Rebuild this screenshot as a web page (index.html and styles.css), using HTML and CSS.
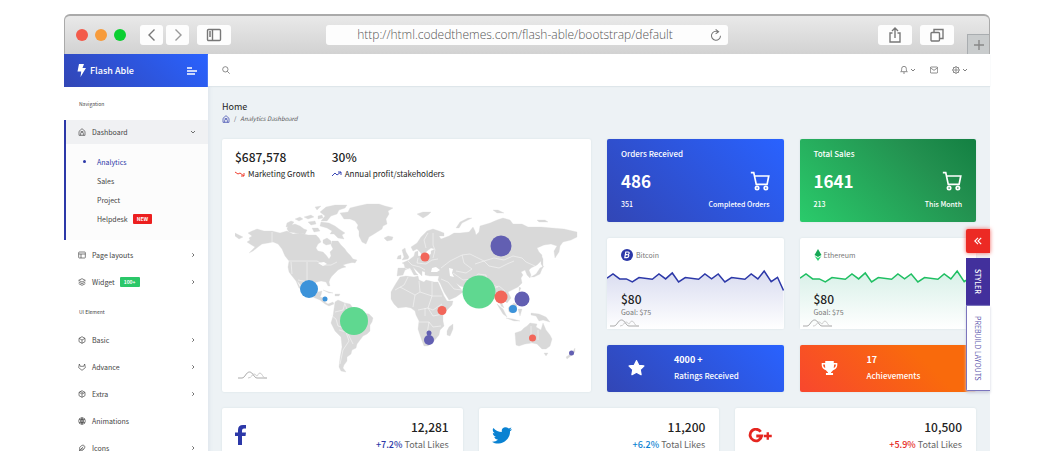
FILE: index.html
```html
<!DOCTYPE html>
<html lang="en">
<head>
<meta charset="utf-8">
<title>Flash Able</title>
<link rel="stylesheet" href="styles.css">
</head>
<body>
<svg class="defs" aria-hidden="true">
  <symbol id="right" viewBox="0 0 24 24"><path d="M9 5l7 7-7 7"/></symbol>
  <symbol id="down" viewBox="0 0 24 24"><path d="M4 8l8 8 8-8"/></symbol>
  <symbol id="home" viewBox="0 0 24 24"><path d="M3 10l9-8 9 8v12H3zM8 22v-6a4 4 0 018 0v6M8 11h8"/></symbol>
  <symbol id="box" viewBox="0 0 24 24"><path d="M12 2l9 5v10l-9 5-9-5V7zM3 7l9 5 9-5M12 12v10"/></symbol>
  <symbol id="cart" viewBox="0 0 24 24"><path d="M1 2h3.500l3 14h13l2-10H5.500"/><circle cx="8.500" cy="20.500" r="2"/><circle cx="19" cy="20.500" r="2"/></symbol>
  <symbol id="curve" viewBox="0 0 30 8"><path d="M0 7h4c3 0 4-6 7.500-6S16 7 19 7h10" stroke="#aaa"/><path d="M10 7c4 0 4-4 6-4s2 2 3 2 1-3 3-3 3 5 5 5h2" stroke="#ccc"/></symbol>
</svg>
<div class="window">
  <div class="chrome">
    <div class="lights"><i class="red"></i><i class="amber"></i><i class="green"></i></div>
    <div class="arrows">
      <button class="key" aria-label="Back"><svg class="i16" viewBox="0 0 16 16"><path d="M10.500 2.500L5 8l5.500 5.500"/></svg></button>
      <button class="key pale" aria-label="Forward"><svg class="i16" viewBox="0 0 16 16"><path d="M5.500 2.500L11 8l-5.500 5.500"/></svg></button>
    </div>
    <button class="key wide" aria-label="Sidebar"><svg class="i16" viewBox="0 0 16 16"><rect x="1.500" y="2.500" width="13" height="11" rx="1"/><path d="M6.500 2.500v11M3 5h2M3 7h2M3 9h2"/></svg></button>
    <div class="address">
      <input type="text" aria-label="Address" value="http://html.codedthemes.com/flash-able/bootstrap/default">
      <button class="reload" aria-label="Reload"><svg class="i12" viewBox="0 0 16 16"><path d="M14 9a6 6 0 11-3.500-5.500M7.500 .5l4 3-4 3"/></svg></button>
    </div>
    <div class="tools">
      <button class="key wide" aria-label="Share"><svg class="i16" viewBox="0 0 16 16"><path d="M5.500 6H3v9h10V6h-2.500M8 11V1M5 4l3-3 3 3"/></svg></button>
      <button class="key wide" aria-label="Tabs"><svg class="i16" viewBox="0 0 16 16"><rect x="2" y="5.500" width="8.500" height="8.500" rx="1"/><path d="M5 5V2.500h9v9h-3"/></svg></button>
    </div>
    <button class="plus" aria-label="New tab"><svg class="i12" viewBox="0 0 12 12"><path d="M6 1v10M1 6h10"/></svg></button>
  </div>
  <div class="app">
    <aside class="sidebar">
      <div class="brand">
        <svg class="bolt" viewBox="0 0 9 13"><path d="M2 0h5L5.500 4H9L3.500 13l.7-5.500H.5z"/></svg>
        <span>Flash Able</span>
        <button class="burger" aria-label="Menu"><svg viewBox="0 0 10 8"><path d="M0 1h5M0 4h10M0 7h8"/></svg></button>
      </div>
      <nav>
        <h6>Navigation</h6>
        <div class="open">
          <a class="item" href="#"><svg class="ic"><use href="#home"/></svg>Dashboard<svg class="end"><use href="#down"/></svg></a>
          <div class="sub">
            <a class="on" href="#">Analytics</a>
            <a href="#">Sales</a>
            <a href="#">Project</a>
            <a href="#">Helpdesk <b class="tag new">NEW</b></a>
          </div>
        </div>
        <div class="group">
          <a class="item" href="#"><svg class="ic" viewBox="0 0 24 24"><rect x="2" y="3" width="20" height="18" rx="2"/><path d="M2 9h20M9 9v12"/></svg>Page layouts<svg class="end"><use href="#right"/></svg></a>
          <a class="item" href="#"><svg class="ic" viewBox="0 0 24 24"><path d="M12 2l10 5-10 5L2 7zM2 12l10 5 10-5M2 17l10 5 10-5"/></svg>Widget <b class="tag count">100+</b><svg class="end"><use href="#right"/></svg></a>
        </div>
        <h6 class="second">UI Element</h6>
        <a class="item" href="#"><svg class="ic"><use href="#box"/></svg>Basic<svg class="end"><use href="#right"/></svg></a>
        <a class="item" href="#"><svg class="ic" viewBox="0 0 24 24"><path d="M4 3l3 7h10l3-7 2 11-10 8L2 14z"/></svg>Advance<svg class="end"><use href="#right"/></svg></a>
        <a class="item" href="#"><svg class="ic" viewBox="0 0 24 24"><path d="M12 2l9 5v10l-9 5-9-5V7zM3 7l9 5 9-5M12 12v10M7 4.500l9 5"/></svg>Extra<svg class="end"><use href="#right"/></svg></a>
        <a class="item" href="#"><svg class="ic" viewBox="0 0 24 24"><circle cx="12" cy="12" r="10"/><circle cx="12" cy="12" r="4"/><path d="M12 2l4 10-4 10-4-10zM3 7l9 1 9-1M3 17l9-1 9 1"/></svg>Animations</a>
        <a class="item" href="#"><svg class="ic" viewBox="0 0 24 24"><path d="M20 12a6 6 0 00-8-8L5 10v9h9zM16 8L2 22M17 15H9"/></svg>Icons<svg class="end"><use href="#right"/></svg></a>
      </nav>
    </aside>
    <div class="page">
      <header class="topbar">
        <button aria-label="Search"><svg class="i8" viewBox="0 0 24 24"><circle cx="10" cy="10" r="8"/><path d="M16 16l7 7"/></svg></button>
        <div class="actions">
          <button aria-label="Notifications"><svg class="i8" viewBox="0 0 24 24"><path d="M2 17c3-2 3-5 3-9a7 7 0 0114 0c0 4 0 7 3 9zM9 21h6"/></svg><svg class="i6"><use href="#down"/></svg></button>
          <button aria-label="Messages"><svg class="i8" viewBox="0 0 24 24"><rect x="1" y="3" width="22" height="18" rx="3"/><path d="M2 6l10 7 10-7"/></svg></button>
          <button aria-label="Settings"><svg class="i8" viewBox="0 0 24 24"><circle cx="12" cy="12" r="9"/><circle cx="12" cy="12" r="3.500"/><path d="M12 0v3M12 21v3M0 12h3M21 12h3M3.500 3.500l2 2M18.500 18.500l2 2M3.500 20.500l2-2M18.500 5.500l2-2"/></svg><svg class="i6"><use href="#down"/></svg></button>
        </div>
      </header>
      <main>
        <h1>Home</h1>
        <div class="crumbs"><a href="#" aria-label="Home"><svg class="i8"><use href="#home"/></svg></a><span>/</span><em>Analytics Dashboard</em></div>
        <section class="cards">
          <article class="card map">
            <div class="stats">
              <div><strong>$687,578</strong><p><svg class="trend down" viewBox="0 0 10 6"><path d="M0 1l3 2 2-1 4 3M9 2v3H6"/></svg>Marketing Growth</p></div>
              <div><strong>30%</strong><p><svg class="trend" viewBox="0 0 10 6"><path d="M0 5l3-3 2 2 4-3M6 1h3v3"/></svg>Annual profit/stakeholders</p></div>
            </div>
            <svg class="world" viewBox="235 200 343 182" role="img" aria-label="World map">
              <g class="land">
                <path d="M248 233L252 231 257 229 264 231 272 231 280 233 287 231 293 234 300 233 308 235 316 235 319 238 321 242 318 244 316 248 318 251 323 252 326 255 329 259 331 256 330 252 333 249 331 245 332 241 338 241 341 245 345 249 347 252 350 255 353 259 355 262 350 263 346 264 343 265 346 267 342 268 338 270 335 273 332 276 330 279 329 282 330 286 328 286 326 282 321 281 317 282 313 283 310 286 310 290 312 294 315 295 318 292 322 291 321 295 320 297 324 298 325 302 328 304 333 302 334 304 329 306 325 304 320 300 315 298 309 295 305 291 302 287 298 282 297 281 301 289 299 288 296 281 292 276 289 272 288 267 289 261 285 256 282 249 278 244 273 242 268 243 262 244 258 247 253 251 249 253 255 247 250 244 247 242 250 240 249 238 252 236z"/>
                <path d="M340 213l8-1 2-4 8-2 9-2 12 0 6 2 8 2-5 3 1 3-3 5 1 5-4 2-1 3-8 5-5 3-3 7-4-2-3-6 0-5-2-3 1-3-3-4-5-2-6 0z"/>
                <path d="M320 212l6-5 9-2 12 0-2 3-6 2-2 4-6 2-4 5-6 0 4-5zM321 222l8 1 6 3 4 3 6 4-3 2 2 4-6-1-4-4-4 0 2-3-5-3-7-2zM288 226l7-2 5 2 4 3 3 1-2 4-9-1-7-1-2-3zM295 219l5-2 3 2-4 2zM304 217l7-2 3 2-6 2zM308 222l7-1 1 3-5 1zM312 228l6 0 2 3-6 1zM287 223l4-2 3 1-3 4-5 1zM318 216l4-1 1 3-5 1zM323 240l4-2 4 3 0 3-5 1-3-2zM315 207l6-1-4 4zM384 238l4-2 5 1-1 3-5 1zM235 233l6 3 2 1-4 2-4-3zM353 259l4 1-2 3-3-1zM323 290l6 2 4 1-4 0zM335 294l5 0-1 2-4 0z"/>
                <path d="M335 302l3-2 7 3 5 1 3 4 5 1 5 4 6 1 4 4-1 4-2 3 0 6-3 3-4 2-3 4-3 4-1 4-4 2-1 4-4 3 0 4-3 4-1 3 3 4-5-1-2-4 1-9 2-11-1-10-6-6-4-8 2-7z"/>
                <path d="M400 277L406 276 414 277 418 276 419 280 424 282 426 280 434 282 438 282 441 289 444 296 447 301 453 301 452 305 446 311 443 315 443 321 444 326 440 330 439 335 434 341 428 346 424 346 421 338 418 329 419 321 416 315 415 311 411 308 406 307 398 308 394 304 391 299 391 292 395 285z"/>
                <path d="M453 324l0 5-3 7-3-1 0-4 2-4z"/>
                <path d="M397 276L398 268 405 268 404 264 402 263 409 260 414 256 415 252 418 251 418 256 427 256 431 254 431 251 435 249 431 248 427 251 425 253 422 255 420 252 417 249 413 251 411 247 417 243 421 237 427 231 433 229 439 231 444 233 444 236 439 236 441 239 449 236 454 233 460 233 469 232 473 227 475 231 476 235 479 232 480 226 490 223 497 220 503 218 510 220 513 224 522 224 528 227 541 227 552 228 564 229 577 232 577 237 571 240 563 242 560 246 559 252 555 258 554 251 557 246 551 244 544 245 537 248 539 252 542 255 541 261 537 265 531 268 529 270 531 275 530 278 527 275 525 270 521 272 523 275 521 278 522 283 518 287 512 290 508 292 511 298 507 303 503 299 502 303 504 308 501 306 499 299 496 297 495 291 491 291 486 297 485 303 482 306 479 302 475 293 472 291 467 288 460 286 456 283 461 289 463 292 456 297 449 300 444 292 440 283 438 280 439 276 430 276 425 275 425 272 422 271 422 276 419 273 415 269 413 267 416 273 418 275 414 275 410 268 405 270 403 275z"/>
                <path d="M402 250l3-2 1 4 3 5-1 2-6 1 2-3zM398 256l3-1 0 4-4 0zM456 228l4-6 8-4 4 0-10 5-3 5zM417 214l6-2 8 0-3 3-5 3zM493 210l5 0 6 3-7 0zM537 220l8 0 3 2-9 0zM541 255l2 4 0 8-2-3zM540 268l4-2-2 3-2 5-6 3-3 0 5-3zM519 287l2 1-2 4zM521 293l3 4-1 6-4-5zM497 304l6 5 4 8-4-3zM506 318l7 1 7 2-6 0zM508 308l6-5 3 2-4 8-4-1zM518 309l4 0-2 7zM531 313l8 1 7 3 4 5-7-2-4 1-3-5-5-1z"/>
                <path d="M515 333l6-2 3-3 3-2 3-3 7 1-1 3 5 3 2-7 3 7 4 5 2 4-2 7-4 3-4 0-5-5-5-1-7 1-6 2-3-1zM544 353l4 0-2 3zM575 348l0 4-3 3-5 4-1-2 6-4z"/>
              </g>
              <path class="lake" d="M432 268l4-1 4 3-3 2-6 0zM449 268l4 1-1 4 2 4-4-1zM318 263l6-1 3 2-4 2z"/>
              <path class="borders" d="M272 232v11M288 261h29l7 4 7 0 6-3M291 262l1 12M298 280l10 2M307 262v20M335 312l8-2 2-7M345 304l3 8 8 1M331 315l5 4 2 7 7 2 4 8 4 8M339 330l7 2 3 9-6 9-3 14M408 277l-4 8-9 5M400 287l15 8 5-3-1-11M415 295l-2 12M420 292l12 4 0-14M432 296l10 0M432 296l-4 12 5 2 9-6M418 310l10-2 5 8 10-2M419 322l10 0 4 5 8-1M429 322l-2 12M425 308v8M405 268l7 3M408 261l4 4 8 2 5 3M418 258l-1 5 9 1 6-4 6-1M426 248l-2-8 4-7M433 233l0 12 2 5-2 8M441 268l9-7 12-6 8-1 8 4 6 3 10-3 10 2 9-4 9 2 4 4 9 4M462 255l2 8 8 6-6 4-10-2M475 264l9-3 5 5 10 2 8-4 7-3M453 273l10 7 9-1 6-5 8 1M441 279l7 3 6 7 8 1M467 288l7-7 8 3 8 4M486 275l1 8 11 4M495 288l4-2 6 5M531 326v18M538 330v10"/>
              <g class="spots"><circle class="sky" cx="309" cy="289" r="9"/><circle class="sky" cx="325" cy="299" r="2.500"/><circle class="mint" cx="354" cy="321" r="14"/><circle class="violet" cx="501" cy="246" r="10.500"/><circle class="coral" cx="425" cy="257" r="4.500"/><circle class="mint" cx="479" cy="292" r="16.500"/><circle class="coral" cx="501" cy="297" r="6.500"/><circle class="violet" cx="522" cy="299" r="7.500"/><circle class="sky" cx="513" cy="309" r="4"/><circle class="coral" cx="442" cy="310.500" r="4.500"/><circle class="violet" cx="429" cy="340" r="5"/><circle class="violet" cx="429" cy="333" r="2.500"/><circle class="coral" cx="532.500" cy="338" r="3.500"/><circle class="violet" cx="571.500" cy="353" r="2.500"/></g>
              <use href="#curve" x="238" y="371" width="30" height="8"/>
            </svg>
          </article>
          <article class="card tile blue"><h2>Orders Received</h2><div class="row"><strong>486</strong><svg class="cart"><use href="#cart"/></svg></div><div class="row small"><span>351</span><span>Completed Orders</span></div></article>
          <article class="card tile teal"><h2>Total Sales</h2><div class="row"><strong>1641</strong><svg class="cart"><use href="#cart"/></svg></div><div class="row small"><span>213</span><span>This Month</span></div></article>
          <article class="card coin btc">
            <svg class="spark" viewBox="22 400 530 196" preserveAspectRatio="none"><defs><linearGradient id="gb" x2="0" y2="1"><stop stop-color="#d9dcf0"/><stop offset="1" stop-color="#fff"/></linearGradient></defs><path fill="url(#gb)" d="M22 443l18-13 20 15h20l18 9 20-13 40 5 20-16 20 15 20-18 19 27 20-13 40 5 19-16 20 15 20-15 20 24 20-13 40 5 19-16 20 15 19-24 21 32 19-13 18 40V596H22z"/><path class="line" d="M22 443l18-13 20 15h20l18 9 20-13 40 5 20-16 20 15 20-18 19 27 20-13 40 5 19-16 20 15 20-15 20 24 20-13 40 5 19-16 20 15 19-24 21 32 19-13 18 40"/></svg>
            <h3><svg class="logo" viewBox="0 0 12 12"><circle cx="6" cy="6" r="6" fill="#2c38a8"/><path d="M4.800 3h2.200q1.600.2 1 1.600-.4 1-1.300 1 1.300.2 1 1.500-.4 1.500-1.800 1.500H3.800zM4.400 5.600h2" fill="none" stroke="#fff" stroke-width="1.200"/></svg>Bitcoin</h3>
            <strong>$80</strong><p>Goal: $75</p><svg class="curve"><use href="#curve"/></svg>
          </article>
          <article class="card coin eth">
            <svg class="spark" viewBox="22 400 530 196" preserveAspectRatio="none"><defs><linearGradient id="ge" x2="0" y2="1"><stop stop-color="#d8f0e8"/><stop offset="1" stop-color="#fff"/></linearGradient></defs><path fill="url(#ge)" d="M22 443l18-13 20 15h20l18 9 20-13 40 5 20-16 20 15 20-18 19 27 20-13 40 5 19-16 20 15 20-15 20 24 20-13 40 5 19-16 20 15 19-24 21 32 19-13 18 40V596H22z"/><path class="line" d="M22 443l18-13 20 15h20l18 9 20-13 40 5 20-16 20 15 20-18 19 27 20-13 40 5 19-16 20 15 20-15 20 24 20-13 40 5 19-16 20 15 19-24 21 32 19-13 18 40"/></svg>
            <h3><svg class="gem" viewBox="0 0 8 12"><path d="M4 0l3.500 6L4 8 .5 6z" fill="#17a755"/><path d="M.5 7L4 9l3.500-2L4 12z" fill="#2ed573"/></svg>Ethereum</h3>
            <strong>$80</strong><p>Goal: $75</p><svg class="curve"><use href="#curve"/></svg>
          </article>
          <article class="card badge blue"><svg viewBox="0 0 24 24"><path d="M12 1l3.400 7 7.600 1-5.500 5.400L18.800 22 12 18.400 5.200 22l1.300-7.600L1 9l7.600-1z" stroke="#fff" stroke-linejoin="round"/></svg><div><strong>4000 +</strong><p>Ratings Received</p></div></article>
          <article class="card badge orange"><svg viewBox="0 0 24 22"><path d="M6 1h12v3h5v3c0 4-3 6-6 7-1 2-3 2-3 4h3v3H7v-3h3c0-2-2-2-3-4-3-1-6-3-6-7V4h5zM3 6c0 3 1 4 3 5L5.500 6zm18 0h-2.500l-.5 5c2-1 3-2 3-5z"/></svg><div><strong>17</strong><p>Achievements</p></div></article>
        </section>
        <section class="social">
          <article class="card"><svg class="fb" viewBox="0 0 11 20"><path d="M11 0v3.500H9Q7 3.500 7 5.500V7.500h4L10.500 11H7v9H3v-9H0V7.500h3V5Q3 0 8 0z"/></svg><div><strong>12,281</strong><p><b>+7.2%</b> Total Likes</p></div></article>
          <article class="card"><svg class="tw" viewBox="0 0 24 20"><path d="M24 2.400q-1 1.500-2.400 2.500C22 13 15 20 7.500 19.600 4.500 19.600 2 19 0 17.400q4 .3 7.200-2.200-3.400-.3-4.600-3.400 1 .2 2.200-.1Q1 10.500 1 6.800q1 .6 2.200.6Q-.5 4 1.700.9q4 4.800 10.100 5Q11 1 15.500.1 18 0 20.200 1.500L23.300.4q-.5 1.700-2.100 2.700z"/></svg><div><strong>11,200</strong><p><b>+6.2%</b> Total Likes</p></div></article>
          <article class="card"><svg class="gp" viewBox="0 0 26 16"><path d="M13.200 4A6.200 6.200 0 1014.200 8.500H8.500" fill="none" stroke="currentColor" stroke-width="3"/><path d="M19.500 4.500h2.500v2.800h3v2.500h-3v2.800h-2.500V9.800h-3V7.300h3z"/></svg><div><strong>10,500</strong><p><b>+5.9%</b> Total Likes</p></div></article>
        </section>
      </main>
    </div>
    <div class="dock">
      <button class="toggle" aria-label="Expand"><svg viewBox="0 0 10 10"><path d="M5 1L1 5l4 4M9 1L5 5l4 4"/></svg></button>
      <button class="styler">STYLER</button>
      <button class="prebuild">PREBUILD LAYOUTS</button>
    </div>
  </div>
</div>
</body>
</html>
```
FILE: styles.css
```css
* { box-sizing: border-box; }
body { margin: 0; height: 100vh; overflow: hidden; background: #fff; color: #222; font: 7px/10px "Noto Sans CJK SC", "Open Sans", sans-serif; }
h1, h2, h3, h6, p { margin: 0; font-weight: 400; }
a { color: inherit; text-decoration: none; }
button { margin: 0; padding: 0; border: 0; background: none; color: inherit; font: inherit; }
svg { display: block; flex: none; fill: none; stroke: currentColor; stroke-width: 2; }
.defs { position: absolute; width: 0; height: 0; }
.i16 { width: 16px; height: 16px; stroke-width: 1.4; }
.i12 { width: 12px; height: 12px; stroke-width: 1.4; }
.i8 { width: 8px; height: 8px; }
.i6 { width: 6px; height: 6px; stroke-width: 3; }

.window { margin: 14px 70px 0 64px; }
.chrome { display: flex; align-items: center; height: 40px; padding-left: 11px; border: 1px solid #aaa; border-top-width: 2px; border-bottom: 0; border-radius: 6px 6px 0 0; background: linear-gradient(#e9e9e9, #d2d2d2); overflow: hidden; color: #777; }
.lights, .arrows, .tools { display: flex; }
.lights { gap: 7px; margin-right: 14px; }
.lights i { width: 12px; height: 12px; border-radius: 50%; }
.red { background: #f35b4b; }
.amber { background: #f79b3b; }
.green { background: #0bcf31; }
.arrows { gap: 3px; margin-right: 8px; }
.key { display: grid; place-items: center; width: 23px; height: 20px; border-radius: 3px; background: #fdfdfd; }
.pale { color: #999; }
.wide { width: 34px; }
.address { display: flex; align-items: center; flex: 0 1 402px; height: 20px; margin-left: 95px; padding-right: 6px; border-radius: 3px; background: #fdfdfd; }
.address input { flex: 1; min-width: 0; padding: 0 6px 0 0; border: 0; background: none; color: #555; font: 300 12px/16px "Open Sans", sans-serif; text-align: center; }
.tools { gap: 8px; margin-left: auto; margin-right: 13px; }
.plus { display: grid; place-items: center; align-self: flex-end; width: 22px; height: 20px; border: 1px solid #a9adb0; border-width: 1px 0 0 1px; background: #c9cccd; color: #888; }

.app { position: relative; display: flex; background: #edf2f5; }
.sidebar { flex: none; width: 144px; background: #fff; color: #444; }
.brand { display: flex; align-items: center; height: 33px; padding: 0 11px 0 13px; background: linear-gradient(45deg, #3246b5, #2962ff); color: #fff; font-size: 9px; font-weight: 500; }
.bolt { width: 9px; height: 13px; margin-right: 4px; fill: #fff; stroke: none; }
.burger { margin-left: auto; }
.burger svg { width: 10px; height: 8px; stroke-width: 1.3; }
h6 { display: flex; align-items: center; height: 33px; padding-left: 15px; font-size: 5px; color: #444; }
.second { height: 31px; padding-top: 2px; }
.item { display: flex; align-items: center; height: 27px; padding: 0 12px 0 14px; }
.ic { width: 8px; height: 8px; margin-right: 6px; }
.end { width: 6px; height: 6px; margin-left: auto; stroke-width: 3; }
.open { border-left: 2px solid #2c38a8; background: #fcfcfc; }
.open .item { height: 24px; padding-left: 12px; background: #f0f1f3; }
.sub { padding: 8px 0 12px; }
.sub a { display: flex; align-items: center; height: 19px; padding-left: 31px; }
.sub .on { padding-left: 17px; color: #2c38a8; }
.on::before { content: ""; width: 3px; height: 3px; margin-right: 11px; border-radius: 50%; background: #2c38a8; }
.group { padding-top: 1px; }
.tag { margin-left: 5px; padding: 0 4px; border-radius: 1px; color: #fff; font-size: 5px; line-height: 10px; }
.new { background: #ec1f1f; }
.count { background: #2bc769; }

.page { flex: 1; min-width: 0; }
.topbar { display: flex; align-items: center; justify-content: space-between; height: 32px; padding: 0 22px 0 14px; background: #fff; color: #555; box-shadow: 0 1px 1px #dfe6ea; }
.actions { display: flex; gap: 14px; }
.actions button { display: flex; align-items: center; gap: 2px; }
main { padding: 14px 14px 0 14px; box-shadow: inset 4px 0 4px -3px #dbe2ea; }
h1 { font-size: 9px; line-height: 14px; }
.crumbs { display: flex; align-items: center; gap: 4px; height: 9px; margin-bottom: 16px; color: #555; font-size: 6px; }
.crumbs a { color: #2c38a8; }
.cards { display: grid; grid-template-columns: repeat(4, minmax(0, 1fr)); gap: 16px; }
.card { border-radius: 2px; background: #fff; box-shadow: 0 0 2px #d5dfe3; }
.map { grid-column: span 2; grid-row: span 3; padding: 11px 13px 9px; }
.stats { display: flex; gap: 17px; color: #222; font-weight: 500; font-size: 8px; }
.stats strong { display: block; font-size: 12px; line-height: 14px; font-weight: 500; }
.stats p { display: flex; align-items: center; height: 20px; }
.trend { width: 10px; height: 6px; margin-right: 3px; color: #3c48b5; stroke-width: 1; }
.trend.down { color: #f04030; }
.world { width: 100%; height: auto; margin-top: 16px; }
.land { fill: #d9d9d9; stroke: #d9d9d9; stroke-width: .3; }
.lake { fill: #fff; stroke: none; }
.borders { stroke: #f6f6f6; stroke-width: .6; }
.spots { stroke: none; }
.sky { fill: #3c93da; }
.mint { fill: #5fd890; }
.violet { fill: #625fb2; }
.coral { fill: #f2665a; }
.world use, .curve { stroke-width: 1; }
.blue { background: linear-gradient(45deg, #3246b5, #2962ff); }
.teal { background: linear-gradient(45deg, #2acb6b, #239150 70%, #138042); }
.orange { background: linear-gradient(45deg, #f8472e, #f96a0c 70%); }
.tile { height: 83px; padding: 10px 14px; color: #fff; font-weight: 500; }
.tile h2 { font-size: 8px; font-weight: 500; }
.row { display: flex; align-items: center; justify-content: space-between; }
.row strong { font-size: 17px; line-height: 26px; font-weight: 700; }
.tile .row:nth-child(2) { height: 44px; }
.cart { width: 20px; height: 20px; stroke-width: 2; }
.small { height: 2px; }
.coin { position: relative; height: 91px; padding: 11px 14px 0; color: #777; }
.btc { color: #2c38a8; }
.eth { color: #1fbf62; }
.coin h3, .coin strong, .coin p { position: relative; }
.coin h3 { display: flex; align-items: center; height: 12px; color: #777; font-size: 7px; }
.logo { width: 12px; height: 12px; margin-right: 3px; stroke: none; }
.gem { width: 8px; height: 12px; margin-right: 2px; stroke: none; }
.coin strong { display: block; margin-top: 30px; color: #222; font-size: 12px; line-height: 16px; font-weight: 500; }
.coin p { color: #777; }
.spark { position: absolute; left: 0; bottom: 0; width: 100%; height: 65px; stroke: none; }
.spark .line { stroke: currentColor; stroke-width: 1.5; vector-effect: non-scaling-stroke; }
.curve { position: absolute; left: 3px; bottom: 2px; width: 30px; height: 8px; }
.badge { display: flex; align-items: center; gap: 29px; height: 47px; padding: 0 0 2px 21px; color: #fff; }
.badge svg { width: 17px; height: 16px; fill: #fff; stroke: none; }
.badge strong { display: block; font-size: 9px; font-weight: 700; line-height: 16px; }
.badge p { font-size: 8px; font-weight: 500; line-height: 16px; }
.social { display: grid; grid-template-columns: repeat(3, minmax(0, 1fr)); gap: 16px; margin-top: 16px; }
.social .card { display: flex; justify-content: space-between; align-items: center; height: 54px; padding: 0 14px 0 13px; text-align: right; color: #666; }
.social svg { fill: currentColor; stroke: none; }
.social strong { display: block; color: #222; font-size: 12px; font-weight: 500; line-height: 20px; }
.social p { font-size: 9px; line-height: 16px; }
.social b { font-weight: 500; }
.fb { width: 11px; height: 20px; }
.fb, .fb + div b { color: #2c38a8; }
.tw { width: 20px; height: 17px; }
.tw, .tw + div b { color: #0a82d2; }
.gp { width: 25px; height: 15px; }
.gp, .gp + div b { color: #e52620; }

.dock { position: absolute; right: 0; top: 175px; display: flex; flex-direction: column; width: 24px; }
.toggle { display: grid; place-items: center; height: 24px; margin-bottom: 5px; border-radius: 2px 0 0 2px; background: #ec2a24; color: #fff; box-shadow: 0 0 4px #f3625d; }
.toggle svg { width: 8px; height: 8px; stroke-width: 1.4; }
.styler, .prebuild { writing-mode: vertical-rl; line-height: 24px; text-align: center; white-space: nowrap; }
.styler { height: 47px; background: #42309c; color: #fff; font-size: 7px; font-weight: 500; }
.prebuild { height: 86px; border: 1px solid #7b75bd; border-right: 0; border-radius: 0 0 0 2px; background: #fff; color: #5d57ad; font-size: 7px; box-shadow: 0 2px 3px #ccd0dd; }
```
